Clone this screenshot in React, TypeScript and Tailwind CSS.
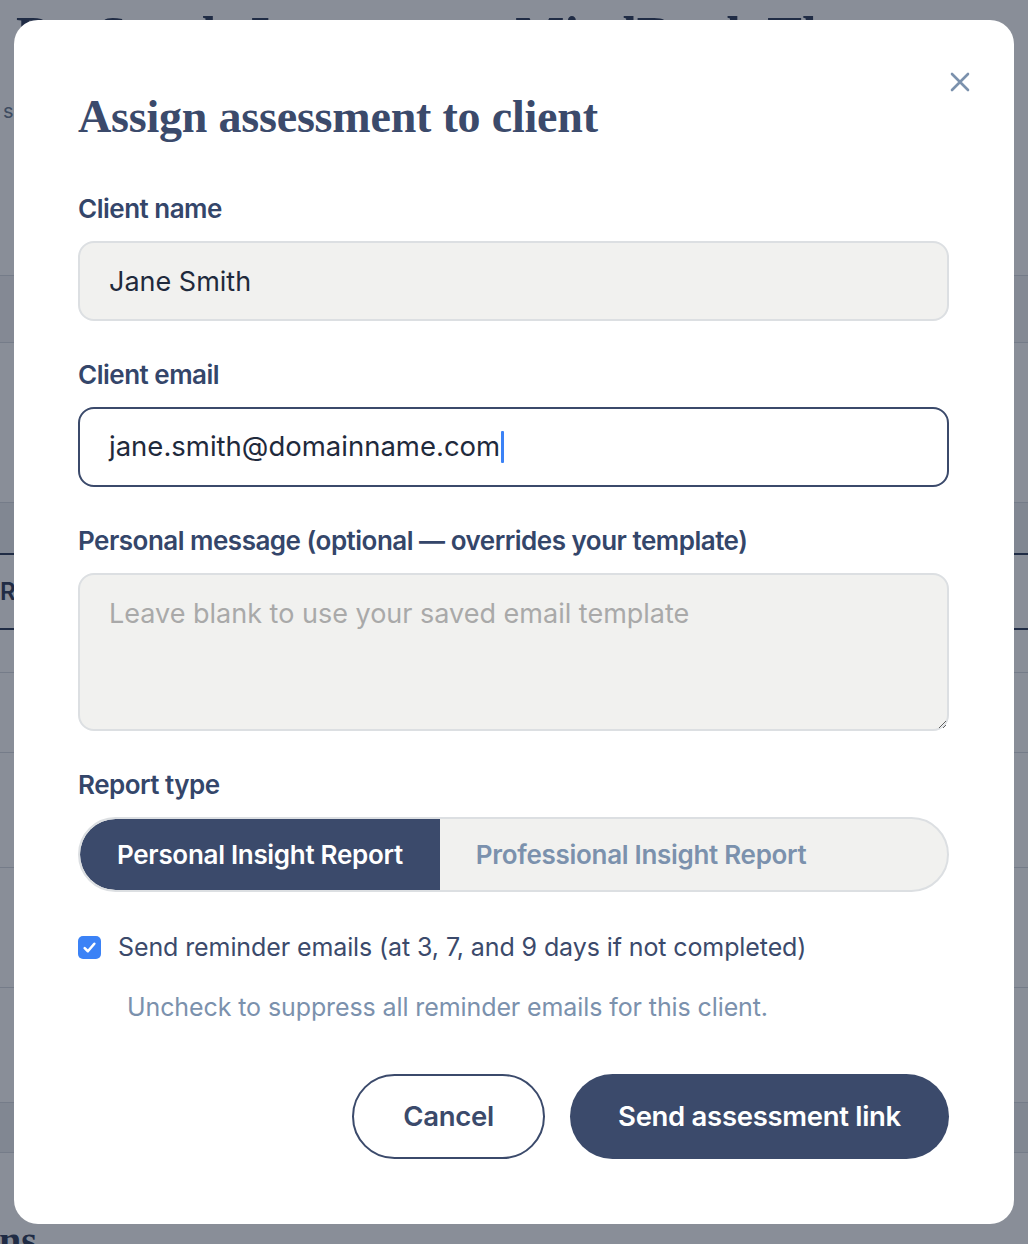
import React, { useState } from "react";

const App: React.FC = () => {
  const [reportType, setReportType] = useState<"personal" | "professional">("personal");
  const [reminders, setReminders] = useState(true);

  const labelCls = "block text-[26px] font-semibold leading-[32px] text-[#34466a] tracking-[-0.5px]";

  return (
    <div className="relative h-[1244px] w-full overflow-hidden bg-white font-['Inter',sans-serif]">
      {/* Page behind the modal */}
      <div className="pt-[6px]">
        <h1 className="pl-[16px] font-['Liberation_Serif',serif] text-[52px] font-bold leading-[60px] text-[#2d3a58] whitespace-nowrap">
          Dr. Sarah Jameson — MindBank Therapy
        </h1>
        <p className="mt-[30px] pl-[3px] text-[20px] text-[#6b7a90]">sessions and assessments overview</p>
      </div>
      <div className="mt-[149px] border-t border-[#d7dbe1]">
        <div className="h-[67px] border-b border-[#d7dbe1] bg-[#f4f5f7]" />
        <div className="h-[160px] border-b border-[#d7dbe1]" />
        <div className="h-[50px] bg-[#eef0f3]" />
        <div className="h-[77px] border-y-2 border-[#2d3a58] flex items-center text-[24px] font-semibold text-[#2d3a58]">
          Reports
        </div>
        <div className="h-[43px] border-b border-[#d7dbe1]" />
        <div className="h-[80px] border-b border-[#d7dbe1]" />
        <div className="h-[115px] border-b border-[#d7dbe1]" />
        <div className="h-[120px] border-b border-[#d7dbe1]" />
        <div className="h-[115px] border-b border-[#d7dbe1]" />
        <div className="h-[50px] border-b border-[#d7dbe1] bg-[#eef0f3]" />
        <div className="ml-[-132px] pt-[64px] font-['Liberation_Serif',serif] text-[40px] font-bold leading-[48px] text-[#2d3a58] whitespace-nowrap">
          Questions
        </div>
      </div>

      {/* Overlay */}
      <div className="fixed inset-0 bg-[rgba(20,30,50,0.5)] flex items-start justify-center pt-[20px]">
        <div className="relative w-[1000px] h-[1204px] rounded-[24px] bg-white pl-[64px] pr-[65px] pt-[73px]">
          <button className="absolute right-[40px] top-[48px] flex h-[28px] w-[28px] items-center justify-center text-[#7b91ad]">
            <svg width="22" height="22" viewBox="0 0 22 22" fill="none" stroke="currentColor" strokeWidth="2.6" strokeLinecap="round">
              <path d="M3 3L19 19M19 3L3 19" />
            </svg>
          </button>

          <h2 className="font-['Liberation_Serif',serif] text-[46px] font-bold leading-[48px] text-[#3b4a6b] tracking-[-0.2px]">
            Assign assessment to client
          </h2>

          <label className={`mt-[52px] ${labelCls}`}>Client name</label>
          <input
            readOnly
            value="Jane Smith"
            className="mt-[16px] block h-[80px] w-full rounded-[16px] border-2 border-[#dcdfe2] bg-[#f1f1ef] px-[29px] text-[27px] text-[#1f2a3c] outline-none"
          />

          <label className={`mt-[38px] ${labelCls}`}>Client email</label>
          <div className="mt-[16px] flex h-[80px] w-full items-center rounded-[16px] border-2 border-[#3b4a6b] bg-white px-[29px] text-[27.5px] text-[#1f2a3c]">
            <span>jane.smith@domainname.com</span>
            <span className="ml-[1px] h-[32px] w-[3px] rounded-[1px] bg-[#3b82f6]" />
          </div>

          <label className={`mt-[38px] ${labelCls}`}>Personal message (optional — overrides your template)</label>
          <textarea
            placeholder="Leave blank to use your saved email template"
            className="mt-[16px] block h-[158px] w-full rounded-[16px] border-2 border-[#dcdfe2] bg-[#f1f1ef] px-[29px] pt-[22px] text-[27px] leading-[34px] text-[#1f2a3c] placeholder:text-[#a9a9a9] outline-none"
          />

          <label className={`mt-[38px] ${labelCls}`}>Report type</label>
          <div className="mt-[16px] flex h-[75px] w-full overflow-hidden rounded-full border-2 border-[#dcdfe2] bg-[#f1f1ef]">
            <button
              onClick={() => setReportType("personal")}
              className={`h-full rounded-l-full px-[37px] text-[26px] font-semibold tracking-[-0.3px] ${
                reportType === "personal" ? "bg-[#3b4a6b] text-white" : "text-[#7b91ad]"
              }`}
            >
              Personal Insight Report
            </button>
            <button
              onClick={() => setReportType("professional")}
              className={`h-full px-[36px] text-[26px] font-semibold tracking-[-0.3px] ${
                reportType === "professional" ? "bg-[#3b4a6b] text-white" : "text-[#7b91ad]"
              }`}
            >
              Professional Insight Report
            </button>
          </div>

          <div className="mt-[39px] flex cursor-pointer items-center gap-[17px]" onClick={() => setReminders(!reminders)}>
            <span
              className={`flex h-[23px] w-[23px] shrink-0 items-center justify-center rounded-[5px] ${
                reminders ? "bg-[#3b82f6]" : "border-2 border-[#9ca3af] bg-white"
              }`}
            >
              {reminders && (
                <svg width="15" height="15" viewBox="0 0 14 14" fill="none" stroke="white" strokeWidth="2.4" strokeLinecap="round" strokeLinejoin="round">
                  <path d="M2.5 7.5L5.5 10.5L11.5 3.5" />
                </svg>
              )}
            </span>
            <span className="text-[25px] leading-[32px] text-[#3b4a6b] tracking-[-0.1px]">
              Send reminder emails (at 3, 7, and 9 days if not completed)
            </span>
          </div>
          <p className="mt-[28px] pl-[49px] text-[25px] leading-[32px] text-[#7b91ad] tracking-[-0.1px]">
            Uncheck to suppress all reminder emails for this client.
          </p>

          <div className="mt-[51px] flex justify-end gap-[25px]">
            <button className="h-[85px] w-[193px] rounded-full border-2 border-[#3b4a6b] text-[27.5px] font-semibold text-[#3b4a6b] tracking-[-0.3px]">
              Cancel
            </button>
            <button className="h-[85px] w-[379px] rounded-full bg-[#3b4a6b] text-[27.5px] font-semibold text-white tracking-[-0.3px]">
              Send assessment link
            </button>
          </div>
        </div>
      </div>
    </div>
  );
};

export default App;
